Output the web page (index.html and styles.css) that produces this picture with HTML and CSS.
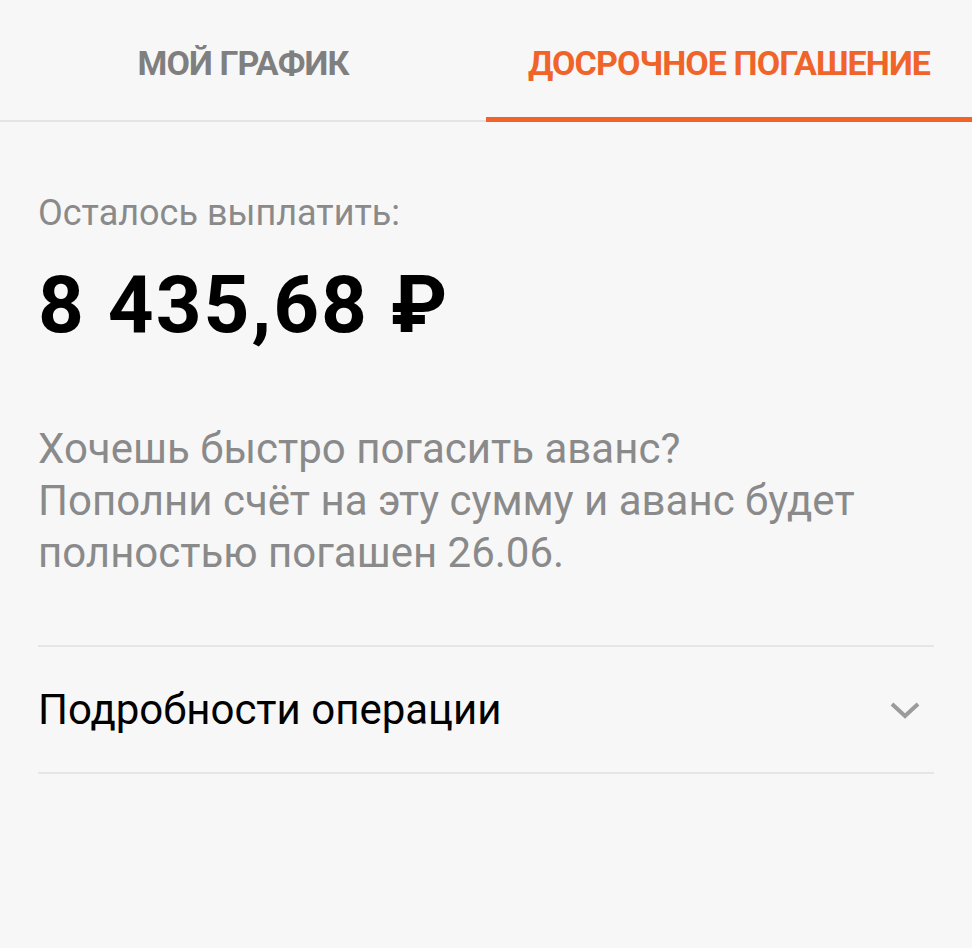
FILE: index.html
```html
<!DOCTYPE html>
<html lang="ru">
<head>
<meta charset="utf-8">
<link rel="stylesheet" href="styles.css">
</head>
<body>
<div class="tabs">
  <div class="tab">МОЙ ГРАФИК</div>
  <div class="tab active">ДОСРОЧНОЕ ПОГАШЕНИЕ</div>
</div>
<main class="content">
  <div class="label">Осталось выплатить:</div>
  <div class="amount">8 435,68 ₽</div>
  <p class="note">Хочешь быстро погасить аванс?<br>Пополни счёт на эту сумму и аванс будет<br>полностью погашен 26.06.</p>
  <div class="details">
    <span class="details-title">Подробности операции</span>
    <svg class="chevron" width="30" height="18" viewBox="0 0 30 18"><path d="M2 3 L15 15 L28 3" fill="none" stroke="#9b9b9b" stroke-width="4"/></svg>
  </div>
</main>
</body>
</html>
```
FILE: styles.css
```css
html, body {
  margin: 0;
  padding: 0;
  background: #f7f7f7;
  font-family: Roboto, "Noto Sans", sans-serif;
}
.tabs {
  display: flex;
  height: 122px;
  border-bottom: 2px solid #e4e4e4;
  box-sizing: border-box;
}
.tab {
  flex: 1;
  display: flex;
  align-items: center;
  justify-content: center;
  font-family: Roboto, sans-serif;
  font-weight: 700;
  font-size: 34px;
  letter-spacing: -0.9px;
  color: #7f7f7f;
  padding-top: 8px;
  box-sizing: border-box;
  border-bottom: 5px solid transparent;
  margin-bottom: -2px;
}
.tab.active {
  color: #f0642a;
  border-bottom-color: #f0642a;
}
.content {
  padding: 0 38px;
}
.label {
  margin-top: 71px;
  font-size: 36px;
  line-height: 40px;
  color: #8a8a8a;
}
.amount {
  margin-top: 27px;
  font-size: 80px;
  line-height: 90px;
  font-weight: 700;
  letter-spacing: 2px;
  color: #000;
}
.note {
  margin: 73px 0 0;
  font-size: 42px;
  line-height: 52px;
  color: #8a8a8a;
}
.details {
  margin-top: 66px;
  border-top: 2px solid #e6e6e6;
  border-bottom: 2px solid #e6e6e6;
  height: 129px;
  box-sizing: border-box;
  display: flex;
  align-items: center;
  justify-content: space-between;
}
.details-title {
  font-size: 42px;
  color: #000;
}
.chevron {
  margin-right: 14px;
}
```
